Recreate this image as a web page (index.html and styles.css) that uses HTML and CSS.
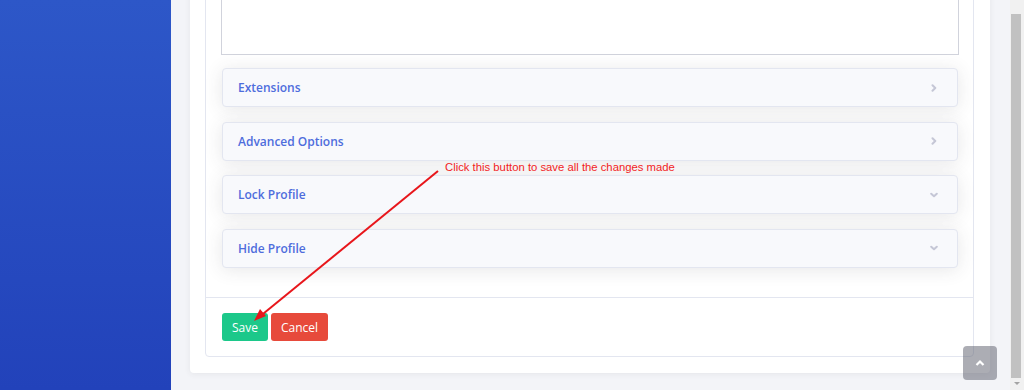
FILE: index.html
```html
<!DOCTYPE html>
<html lang="en">
<head>
    <meta charset="UTF-8">
    <meta name="viewport" content="width=device-width, initial-scale=1.0">
    <title>Edit Profile</title>
    <link rel="stylesheet" href="styles.css">
</head>
<body>
    <div class="layout">
        <aside class="sidebar"></aside>

        <main class="content">
            <div class="card">
                <div class="panel">
                    <div class="panel-body">
                        <textarea class="notes"></textarea>

                        <div class="accordion">
                            <div class="acc-item">
                                <span>Extensions</span>
                                <svg class="chev" width="8" height="8" viewBox="0 0 8 8"><path d="M2.5 1.2 L5.3 4 L2.5 6.8" /></svg>
                            </div>
                            <div class="acc-item">
                                <span>Advanced Options</span>
                                <svg class="chev" width="8" height="8" viewBox="0 0 8 8"><path d="M2.5 1.2 L5.3 4 L2.5 6.8" /></svg>
                            </div>
                            <div class="acc-item">
                                <span>Lock Profile</span>
                                <svg class="chev" width="8" height="8" viewBox="0 0 8 8"><path d="M1.2 2.7 L4 5.3 L6.8 2.7" /></svg>
                            </div>
                            <div class="acc-item">
                                <span>Hide Profile</span>
                                <svg class="chev" width="8" height="8" viewBox="0 0 8 8"><path d="M1.2 2.7 L4 5.3 L6.8 2.7" /></svg>
                            </div>
                        </div>
                    </div>

                    <div class="panel-footer">
                        <button class="btn btn-save">Save</button>
                        <button class="btn btn-cancel">Cancel</button>
                    </div>
                </div>
            </div>
        </main>

        <div class="scrollbar">
            <div class="thumb"></div>
            <div class="arrow-down"></div>
        </div>
    </div>

    <!-- annotation over the screenshot -->
    <div class="note-text">Click this button to save all the changes made</div>
    <svg class="note-arrow" width="1024" height="390" viewBox="0 0 1024 390">
        <line x1="438" y1="171" x2="258" y2="318" />
        <path d="M254 321 L260 309 L266 316 Z" />
    </svg>

    <a class="scroll-top" href="#">
        <svg width="12" height="12" viewBox="0 0 12 12"><path d="M2.5 8 L6 4.5 L9.5 8" /></svg>
    </a>
</body>
</html>
```

FILE: styles.css
```css
html, body {
    margin: 0;
    height: 100%;
    overflow: hidden;
}

body {
    font-family: 'Open Sans', 'Liberation Sans', sans-serif;
    background-color: #f1f2f7;
    color: #858796;
}

.layout {
    display: flex;
    height: 390px;
}

.sidebar {
    width: 171px;
    flex-shrink: 0;
    background: linear-gradient(180deg, #2d57c8 0%, #2242ba 100%);
}

.content {
    flex: 1;
    padding: 0 20px 0 19px;
    background-color: #f3f4f8;
}

.card {
    margin-top: -60px;
    background-color: #fff;
    border-radius: 4px;
    padding: 15px 16px 16px 15px;
    box-shadow: 0 1px 6px rgba(58, 59, 69, 0.08);
}

.panel {
    border: 1px solid #e3e6f0;
    border-radius: 4px;
}

.panel-body {
    padding: 15px 14px 29.5px 15px;
}

.notes {
    display: block;
    box-sizing: border-box;
    width: 100%;
    height: 84px;
    border: 1px solid #d1d3dc;
    resize: none;
    margin: 0;
}

.accordion {
    margin-top: 13px;
    display: flex;
    flex-direction: column;
    gap: 14.5px;
    padding: 0 1px 0 1px;
}

.acc-item {
    height: 39px;
    box-sizing: border-box;
    display: flex;
    align-items: center;
    justify-content: space-between;
    padding: 0 19px 0 15px;
    background-color: #f8f9fc;
    border: 1px solid #e3e6f0;
    border-radius: 4px;
    box-shadow: 0 2px 18px rgba(58, 59, 69, 0.12);
    color: #4e6ddc;
    font-size: 12px;
    font-weight: 600;
}

.chev path {
    fill: none;
    stroke: #c5c7d6;
    stroke-width: 2;
    stroke-linecap: round;
    stroke-linejoin: round;
}

.panel-footer {
    border-top: 1px solid #e3e6f0;
    padding: 15px 15px 15px 16px;
    display: flex;
    gap: 3px;
}

.btn {
    height: 28px;
    border: none;
    border-radius: 3px;
    color: #fff;
    font-family: 'Open Sans', 'Liberation Sans', sans-serif;
    font-size: 12px;
    padding: 0 10px;
}

.btn-save {
    width: 46px;
    background-color: #1cc88a;
}

.btn-cancel {
    width: 57px;
    background-color: #e74a3b;
}

.scrollbar {
    width: 14px;
    flex-shrink: 0;
    background-color: #f1f1f1;
}

.thumb {
    margin: 14px 3px 0 1px;
    height: 364px;
    background-color: #c1c1c1;
}

.arrow-down {
    margin: 4px auto 0;
    width: 0;
    height: 0;
    border-left: 3px solid transparent;
    border-right: 3px solid transparent;
    border-top: 3px solid #a3a3a3;
}

.note-text {
    position: absolute;
    left: 445px;
    top: 161px;
    color: #f21d1d;
    font-family: 'Liberation Sans', sans-serif;
    font-size: 11.3px;
}

.note-arrow {
    position: absolute;
    left: 0;
    top: 0;
    pointer-events: none;
}

.note-arrow line {
    stroke: #e8161b;
    stroke-width: 2;
}

.note-arrow path {
    fill: #e8161b;
}

.scroll-top {
    position: absolute;
    left: 963px;
    top: 346px;
    width: 34px;
    height: 34px;
    border-radius: 4px;
    background-color: rgba(90, 92, 105, 0.5);
    display: flex;
    align-items: center;
    justify-content: center;
}

.scroll-top path {
    fill: none;
    stroke: #fff;
    stroke-width: 2.2;
}
```
